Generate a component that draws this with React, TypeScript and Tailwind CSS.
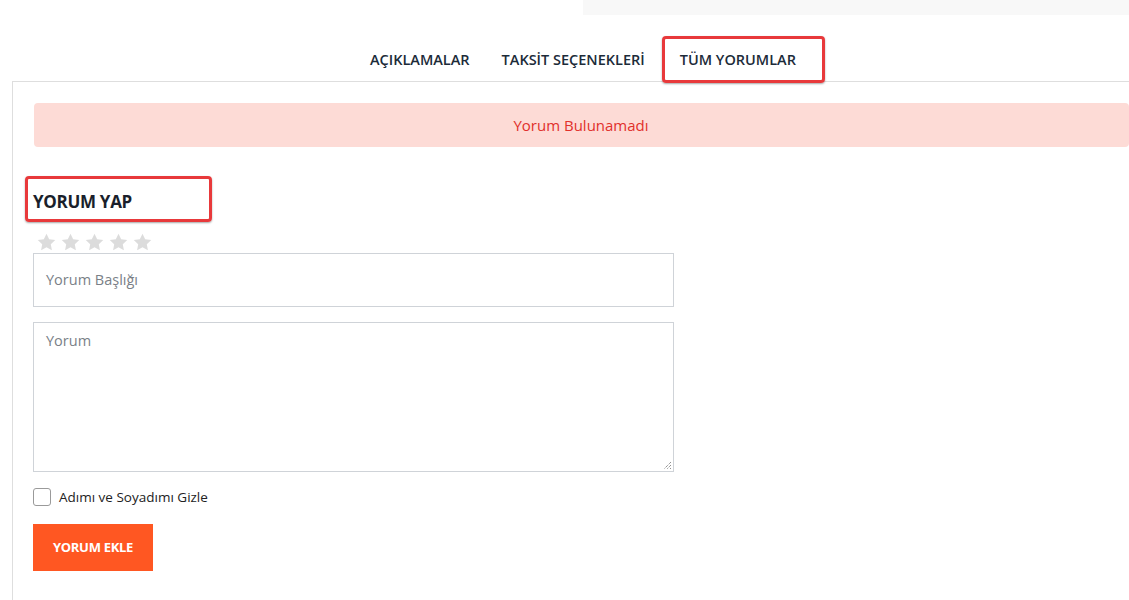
import React from "react";

const Star = () => (
  <svg width="19" height="18" viewBox="0 0 24 23" className="block">
    <path d="M12 0.8l3.4 7.1 7.8 1-5.7 5.4 1.4 7.7L12 18.3 5.1 22l1.4-7.7L0.8 8.9l7.8-1z" fill="#dcdcdc" />
  </svg>
);

export default function App() {
  return (
    <div className="w-[1129px] h-[600px] bg-white overflow-hidden relative" style={{ fontFamily: '"Open Sans", "Noto Sans", sans-serif' }}>
      <div className="flex justify-end">
        <div className="w-[546px] h-[15px] bg-[#f8f8f8]" />
      </div>
      <div className="flex pl-[354px] mt-[21px] h-[45px]">
        <div className="flex items-center text-[14.5px] font-semibold text-[#1c2b39]">
          <div className="px-[16px] h-[45px] flex items-center pt-[2px]">AÇIKLAMALAR</div>
          <div className="px-[16px] h-[45px] flex items-center pt-[2px]">TAKSİT SEÇENEKLERİ</div>
          <div className="relative pl-[18px] pr-[29px] h-[45px] flex items-center pt-[2px] ml-[1px]">
            TÜM YORUMLAR
            <div className="absolute left-0 top-0 right-0 h-[47px] border-[3px] border-[#e8393b] rounded-[4px] shadow-[0_1px_2px_rgba(0,0,0,0.35)]" />
          </div>
        </div>
      </div>
      <div className="ml-[12px] border-l border-t border-[#dedede] h-[600px] pl-[20px] pt-[21px]">
        <div className="h-[44px] w-[1095px] ml-[1px] bg-[#fddbd6] rounded-[4px] flex items-center justify-center text-[15px] text-[#e1302b] pr-[1px]">
          Yorum Bulunamadı
        </div>
        <div className="relative mt-[29px] w-[187px] h-[46px] ml-[-8px]">
          <div className="absolute inset-0 border-[3px] border-[#e8393b] rounded-[4px] shadow-[0_1px_2px_rgba(0,0,0,0.35)]" />
          <div className="pl-[8px] pt-[13px] text-[17px] font-bold text-[#1a1f2b] tracking-[-0.3px]">YORUM YAP</div>
        </div>
        <div className="flex gap-[5px] ml-[4px] mt-[11px] h-[20px] overflow-hidden">
          <Star /><Star /><Star /><Star /><Star />
        </div>
        <div className="w-[641px] h-[54px] border border-[#cfd3d8] flex items-center pl-[12px] text-[14.5px] text-[#7a7f87]">
          Yorum Başlığı
        </div>
        <div className="relative w-[641px] h-[150px] border border-[#cfd3d8] mt-[15px] pl-[12px] pt-[7px] text-[14.5px] text-[#7a7f87]">
          Yorum
          <svg className="absolute right-[1px] bottom-[1px]" width="10" height="10" viewBox="0 0 10 10">
            <path d="M9 2L2 9M9 5L5 9M9 8L8 9" stroke="#666" strokeWidth="1" strokeDasharray="1 1" />
          </svg>
        </div>
        <div className="flex items-center mt-[15px] gap-[8px]">
          <div className="w-[18px] h-[18px] border border-[#9a9a9a] rounded-[3px] bg-white" />
          <span className="text-[13.5px] text-[#222]">Adımı ve Soyadımı Gizle</span>
        </div>
        <div className="mt-[17px] w-[120px] h-[47px] bg-[#ff5722] flex items-center justify-center text-white text-[13px] font-bold tracking-[-0.3px]">
          YORUM EKLE
        </div>
      </div>
    </div>
  );
}
